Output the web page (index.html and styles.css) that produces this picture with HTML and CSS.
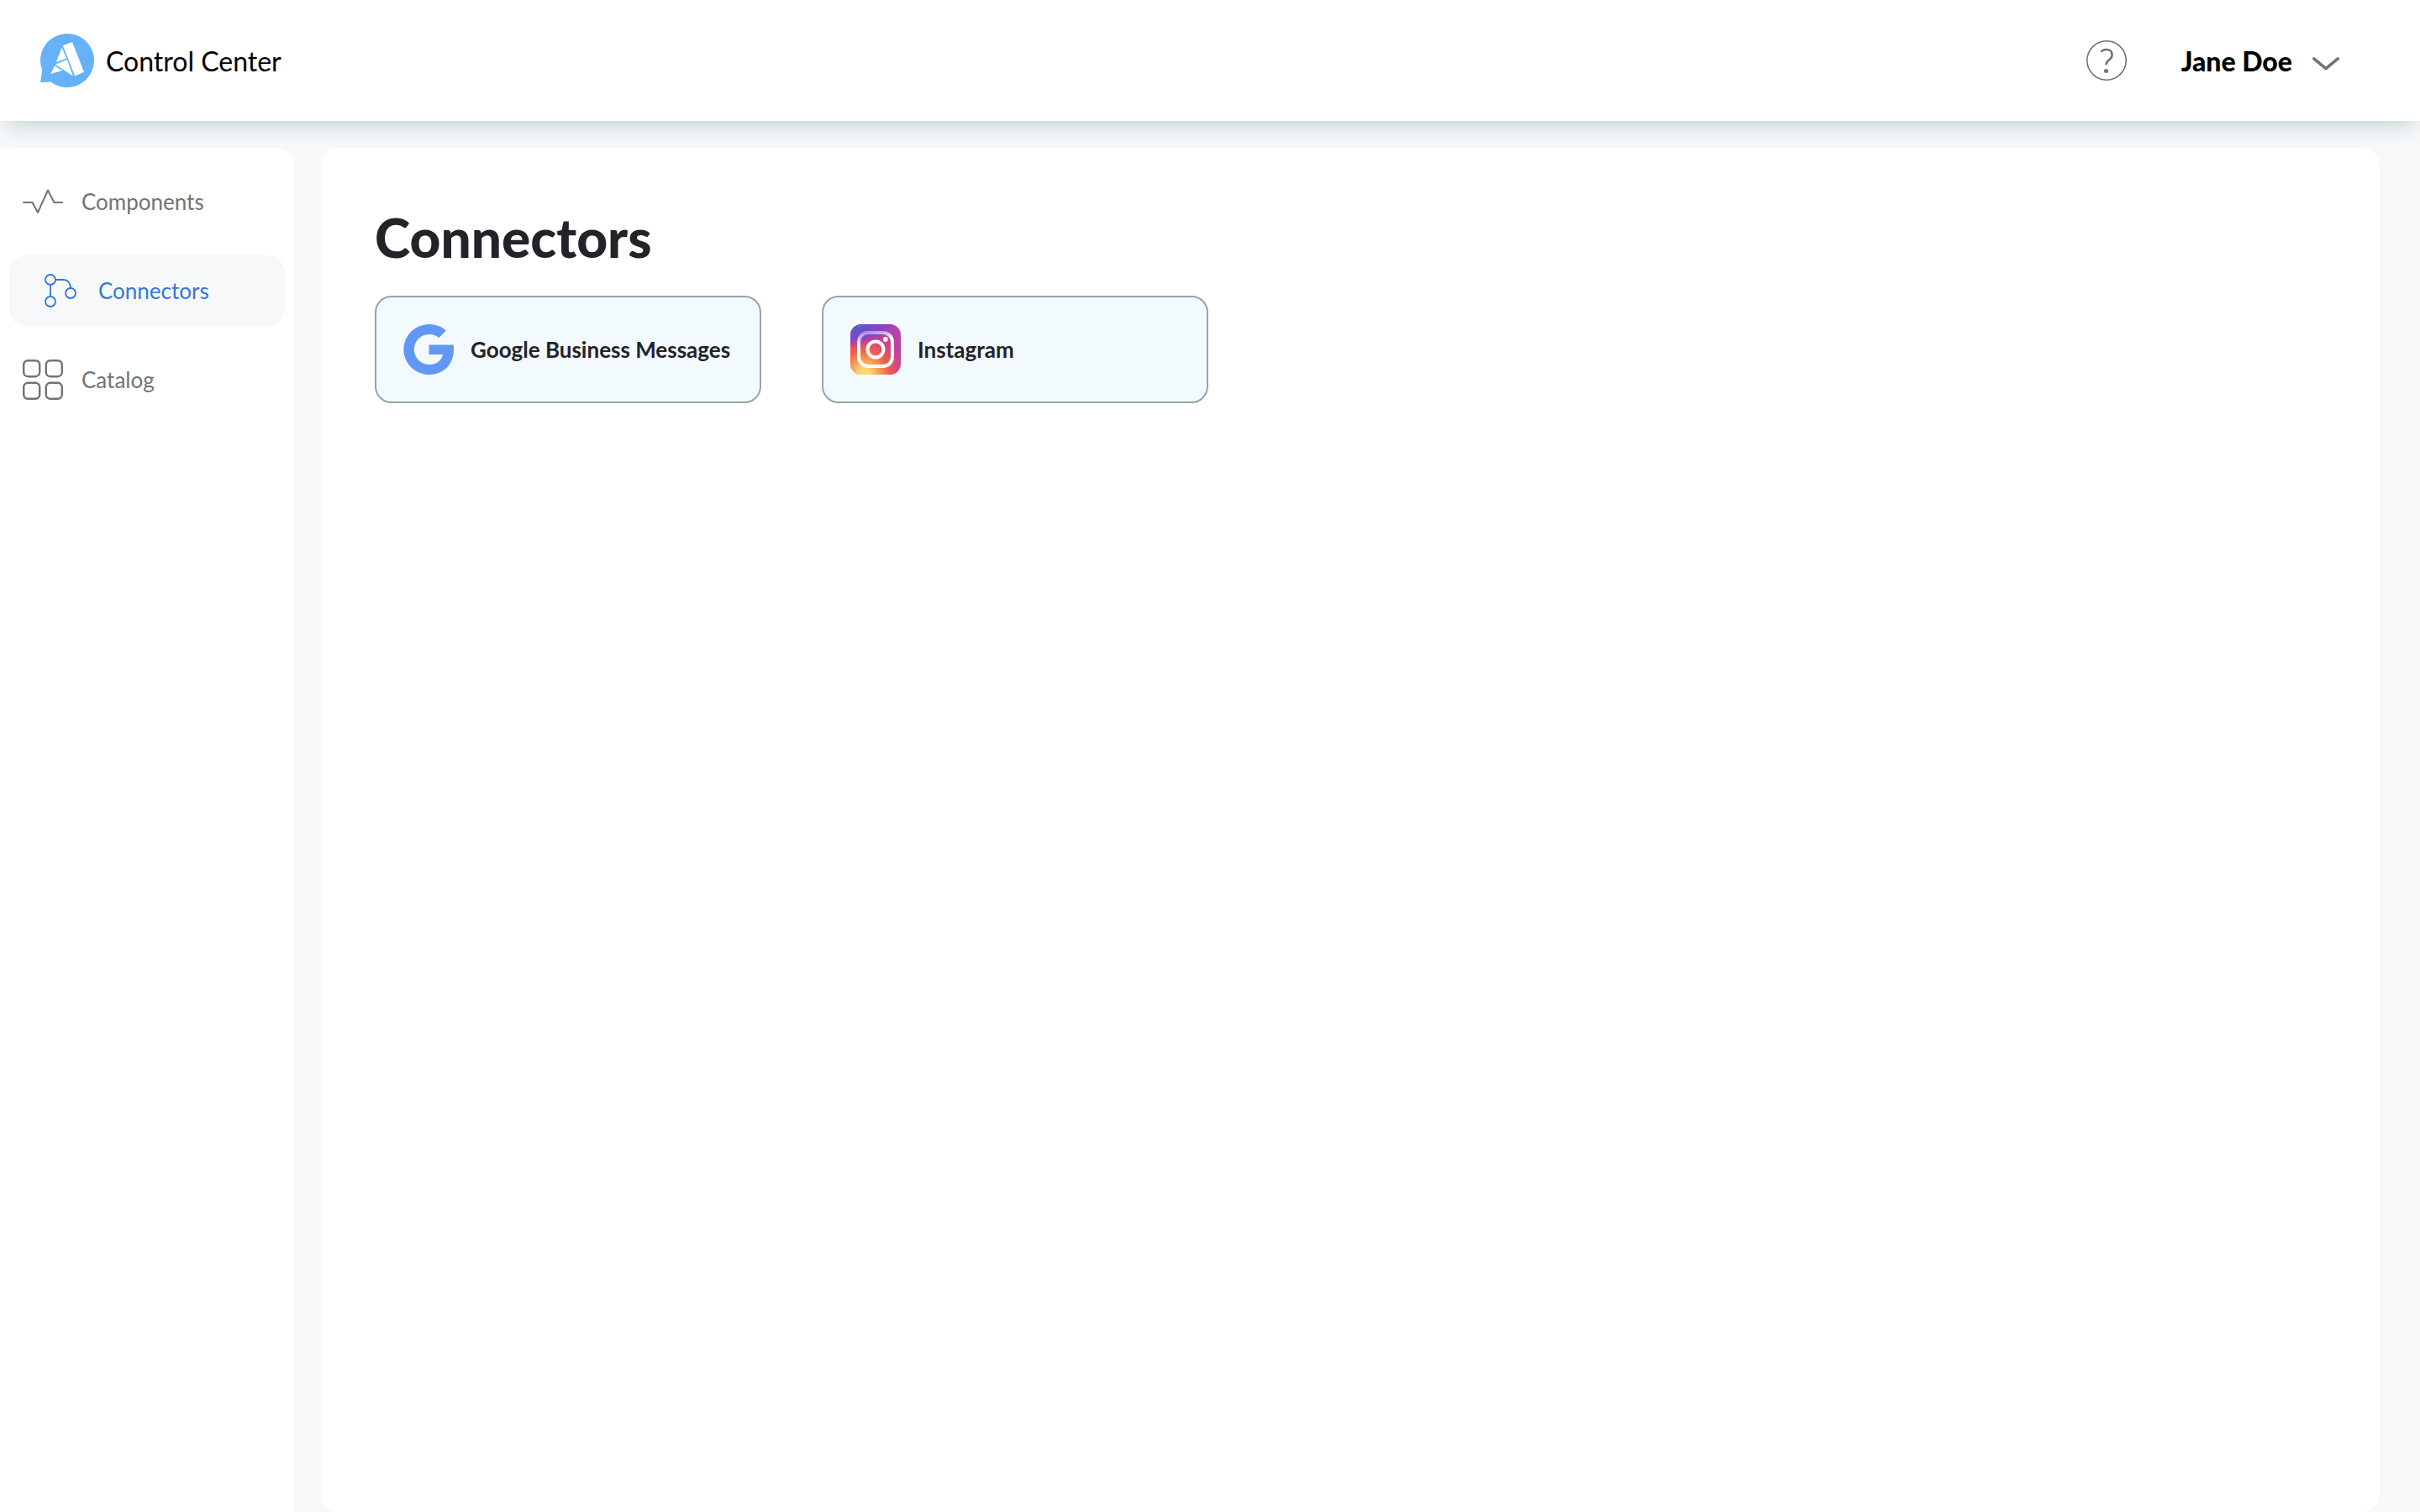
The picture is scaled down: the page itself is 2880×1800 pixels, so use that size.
FILE: index.html
```html
<!DOCTYPE html>
<html lang="en">
<head>
  <meta charset="utf-8">
  <meta name="viewport" content="width=device-width, initial-scale=1">
  <title>Control Center</title>
  <link rel="stylesheet" href="styles.css">
</head>
<body>
  <header class="topbar">
    <a class="brand" href="#">
      <svg class="brand-logo" viewBox="0 0 64 64" aria-hidden="true">
        <path fill="#66b2f8" d="M32 0a32 32 0 1 1-19.500 57.400L0 58l2.200-14.400A32 32 0 0 1 32 0z"/>
        <path fill="#fff" d="M26.700 14.300 38 10l14 35.700-11 4.600zM25.700 16.700 31 29.500 18.700 34zM31.700 31 39 50.500 18 36.800zM17 38.300l9 5.700-13.700 4z"/>
      </svg>
      <span>Control Center</span>
    </a>
    <div class="account">
      <button class="help" type="button" aria-label="Help">
        <svg viewBox="0 0 48 48" fill="none" stroke="currentColor" aria-hidden="true">
          <circle cx="24" cy="24" r="23.200" stroke-width="1.600"/>
          <path stroke-width="2.600" d="M17.500 13.800C19 11.600 21.300 11 23.600 11c4.300 0 7 2.500 7 6.200 0 2.600-1.300 4.200-3.400 5.800-2.600 2-3.700 3-3.700 6"/>
          <circle cx="23.500" cy="36.500" r="2.500" fill="currentColor" stroke="none"/>
        </svg>
      </button>
      <button class="user" type="button">
        <span>Jane Doe</span>
        <svg viewBox="0 0 32 16" fill="none" stroke="#737373" stroke-width="3.600" stroke-linecap="round" stroke-linejoin="round" aria-hidden="true">
          <path d="M1.800 1.900 16 13.700 30.200 1.900"/>
        </svg>
      </button>
    </div>
  </header>

  <div class="layout">
    <nav class="sidebar" aria-label="Main">
      <a class="nav-item" href="#">
        <svg viewBox="0 0 48 48" fill="none" stroke="currentColor" stroke-width="2" stroke-linecap="round" stroke-linejoin="round" aria-hidden="true">
          <path d="M1 25h10.500l6.500 12L30 10.500 37.500 25H47"/>
        </svg>
        <span>Components</span>
      </a>
      <a class="nav-item nav-item-active" href="#" aria-current="page">
        <svg viewBox="0 0 48 48" fill="none" stroke="currentColor" stroke-width="1.800" aria-hidden="true">
          <circle cx="13" cy="11" r="6"/>
          <circle cx="13" cy="37" r="6"/>
          <circle cx="37" cy="27" r="6"/>
          <path d="M13 17v14M19 11h9c5.500 0 9 4 9 10"/>
        </svg>
        <span>Connectors</span>
      </a>
      <a class="nav-item" href="#">
        <svg viewBox="0 0 48 48" fill="none" stroke="currentColor" stroke-width="2.400" aria-hidden="true">
          <rect x="1.200" y="1.200" width="19" height="19" rx="5"/>
          <rect x="27.800" y="1.200" width="19" height="19" rx="5"/>
          <rect x="1.200" y="27.800" width="19" height="19" rx="5"/>
          <rect x="27.800" y="27.800" width="19" height="19" rx="5"/>
        </svg>
        <span>Catalog</span>
      </a>
    </nav>

    <main class="content">
      <h1>Connectors</h1>
      <div class="cards">
        <button class="card" type="button">
          <svg viewBox="0 0 60 60" aria-hidden="true">
            <path fill="#6297f4" d="M50.800 7.500 42.300 16.200A17.600 17.600 0 0 0 30.800 12C20.800 12 12.800 20 12.800 30s8 18 18 18c9.500 0 15-5.500 16.200-12H30.500V24.500h29.200c.3 1.800.3 3.400.3 5.300C60 48 48 60 30.800 60A30.500 30 0 0 1 30.800 0c7.800 0 14.700 2.800 20 7.500z"/>
          </svg>
          <span>Google Business Messages</span>
        </button>
        <button class="card" type="button">
          <svg viewBox="0 0 60 60" aria-hidden="true">
            <defs>
              <linearGradient id="ig-base" x1="0" y1="0.600" x2="1" y2="0.400">
                <stop offset="0" stop-color="#d6457a"/>
                <stop offset="0.600" stop-color="#c8408c"/>
                <stop offset="1" stop-color="#b83fae"/>
              </linearGradient>
              <radialGradient id="ig-warm" gradientUnits="userSpaceOnUse" cx="17" cy="60" r="52">
                <stop offset="0" stop-color="#fddc6c"/>
                <stop offset="0.150" stop-color="#fbd46a"/>
                <stop offset="0.550" stop-color="#ee6147"/>
                <stop offset="1" stop-color="#d8457c" stop-opacity="0"/>
              </radialGradient>
              <radialGradient id="ig-cool" gradientUnits="userSpaceOnUse" cx="0" cy="0" r="68" gradientTransform="rotate(-12) scale(1 0.420)">
                <stop offset="0" stop-color="#3f78cc"/>
                <stop offset="0.350" stop-color="#6a50c8"/>
                <stop offset="0.700" stop-color="#8a40c4" stop-opacity="0.900"/>
                <stop offset="1" stop-color="#a03cc0" stop-opacity="0"/>
              </radialGradient>
              <linearGradient id="ig-frame" gradientUnits="userSpaceOnUse" x1="21" y1="6" x2="25" y2="26">
                <stop offset="0.200" stop-color="#a09af0"/>
                <stop offset="0.800" stop-color="#fff"/>
              </linearGradient>
            </defs>
            <rect width="60" height="60" rx="13" fill="url(#ig-base)"/>
            <rect width="60" height="60" rx="13" fill="url(#ig-warm)"/>
            <rect width="60" height="60" rx="13" fill="url(#ig-cool)"/>
            <rect x="10" y="10" width="40" height="40" rx="11" fill="none" stroke="url(#ig-frame)" stroke-width="4"/>
            <circle cx="30" cy="30" r="9.500" fill="none" stroke="#fff" stroke-width="4"/>
            <circle cx="41.800" cy="18" r="2.900" fill="#fff"/>
          </svg>
          <span>Instagram</span>
        </button>
      </div>
    </main>
  </div>
</body>
</html>
```

FILE: styles.css
```css
* {
  box-sizing: border-box;
}

body {
  display: flex;
  flex-direction: column;
  min-height: 100vh;
  margin: 0;
  background: #f6f8fa;
  color: #23232a;
  font-family: Lato, "Liberation Sans", sans-serif;
  font-size: 26px;
}

a {
  color: inherit;
  text-decoration: none;
}

button {
  padding: 0;
  border: 0;
  background: none;
  color: inherit;
  font: inherit;
  cursor: pointer;
}

svg {
  display: block;
  flex: none;
}

.topbar {
  display: flex;
  align-items: flex-start;
  justify-content: space-between;
  height: 144px;
  padding: 40px 96px 0 48px;
  background: #fff;
  color: #000;
  font-size: 32px;
  box-shadow: 0 12px 24px -8px rgba(0, 50, 60, 0.21);
}

.brand {
  display: flex;
  align-items: center;
  gap: 14px;
}

.brand-logo {
  width: 64px;
  height: 64px;
}

.account {
  display: flex;
  align-items: center;
  gap: 65px;
  height: 64px;
}

.help {
  color: #737373;
}

.help svg {
  width: 48px;
  height: 48px;
}

.user {
  display: flex;
  align-items: center;
  gap: 24px;
  font-weight: 900;
}

.user svg {
  width: 32px;
  height: 16px;
  margin-top: 8px;
}

.layout {
  display: flex;
  flex: 1;
  gap: 32px;
  padding: 32px 48px 0 0;
}

.sidebar {
  display: flex;
  flex: none;
  flex-direction: column;
  gap: 22px;
  width: 350px;
  padding: 22px 11px;
  border-top-right-radius: 20px;
  background: #fff;
}

.nav-item {
  display: flex;
  align-items: center;
  gap: 22px;
  height: 84px;
  padding: 0 16px;
  border-radius: 20px;
  color: #737373;
}

.nav-item svg {
  width: 48px;
  height: 48px;
}

.nav-item-active {
  padding-left: 36px;
  background: #f6f8fa;
  color: #3478d6;
}

.content {
  flex: 1;
  padding: 64px;
  border-radius: 20px;
  background: #fff;
}

h1 {
  margin: 0 0 26px;
  font-size: 64px;
  font-weight: 900;
  line-height: 86px;
}

.cards {
  display: flex;
  flex-wrap: wrap;
  gap: 72px;
}

.card {
  display: flex;
  align-items: center;
  gap: 20px;
  width: 460px;
  height: 128px;
  padding: 0 32px;
  border: 2px solid #98a2ab;
  border-radius: 20px;
  background: #f2fafe;
  font-weight: 700;
}

.card svg {
  width: 60px;
  height: 60px;
}
```
